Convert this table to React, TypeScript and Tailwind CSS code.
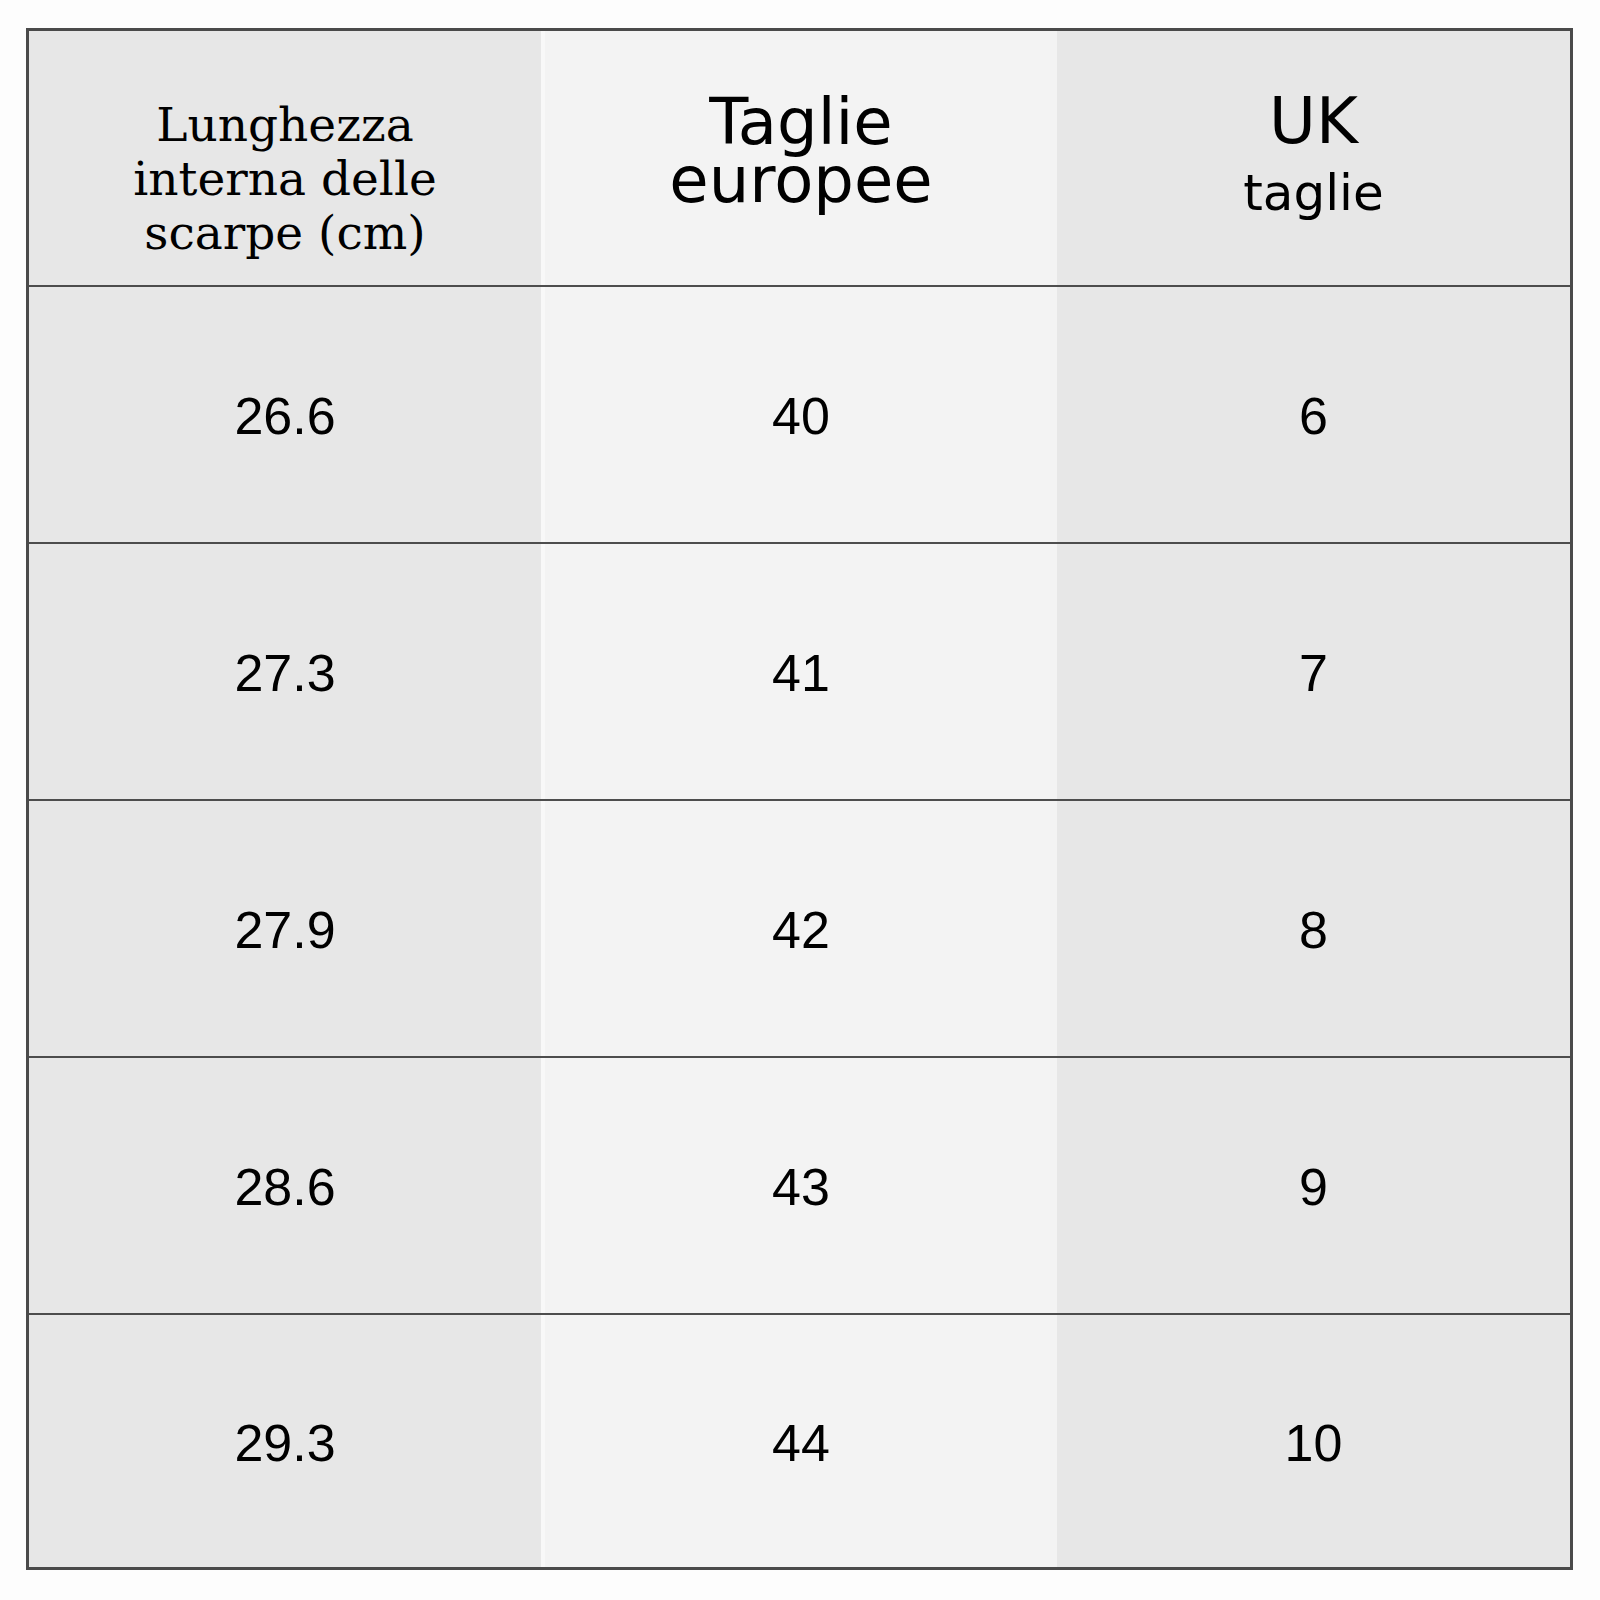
const rows = [
	["26.6", "40", "6"],
	["27.3", "41", "7"],
	["27.9", "42", "8"],
	["28.6", "43", "9"],
	["29.3", "44", "10"],
];

const serif = "font-['DejaVu_Serif',serif]";
const sans = "font-['DejaVu_Sans',sans-serif]";
const num = "font-['Liberation_Sans',Arial,sans-serif]";

export default function App() {
	return (
		<div className="w-[1600px] h-[1600px] bg-[#fdfdfd] pl-[26px] pt-[28px] text-black">
			<div className="w-[1547px] border-[3px] border-[#4a4a4a] bg-[#e7e7e7]">
				{/* Header */}
				<div className="grid grid-cols-[512px_516px_513px] h-[256px] border-b-2 border-[#4d4d4d]">
					<div
						className={`flex flex-col items-center pt-[67px] text-[47px] leading-[54px] bg-[#e7e7e7] ${serif}`}
					>
						<span>Lunghezza</span>
						<span>interna delle</span>
						<span>scarpe (cm)</span>
					</div>
					<div
						className={`flex flex-col items-center pt-[62px] text-[64px] leading-[58px] bg-[#f3f3f3] border-l-[4px] border-[#f8f8f8] ${sans}`}
					>
						<span>Taglie</span>
						<span>europee</span>
					</div>
					<div
						className={`flex flex-col items-center pt-[61px] bg-[#e7e7e7] ${sans}`}
					>
						<span className="text-[64px] leading-[58px]">UK</span>
						<span className="text-[50px] leading-[56px] mt-[15px]">
							taglie
						</span>
					</div>
				</div>

				{/* Body rows */}
				{rows.map((r, i) => (
					<div
						key={i}
						className={`grid grid-cols-[512px_516px_513px] ${
							i < rows.length - 1
								? "h-[257px] border-b-2 border-[#4d4d4d]"
								: "h-[252px]"
						} text-[52px] leading-none ${num}`}
					>
						<div className="flex items-center justify-center pt-[3px] bg-[#e7e7e7]">
							{r[0]}
						</div>
						<div className="flex items-center justify-center pt-[3px] bg-[#f3f3f3] border-l-[4px] border-[#f8f8f8]">
							{r[1]}
						</div>
						<div className="flex items-center justify-center pt-[3px] bg-[#e7e7e7]">
							{r[2]}
						</div>
					</div>
				))}
			</div>
		</div>
	);
}
